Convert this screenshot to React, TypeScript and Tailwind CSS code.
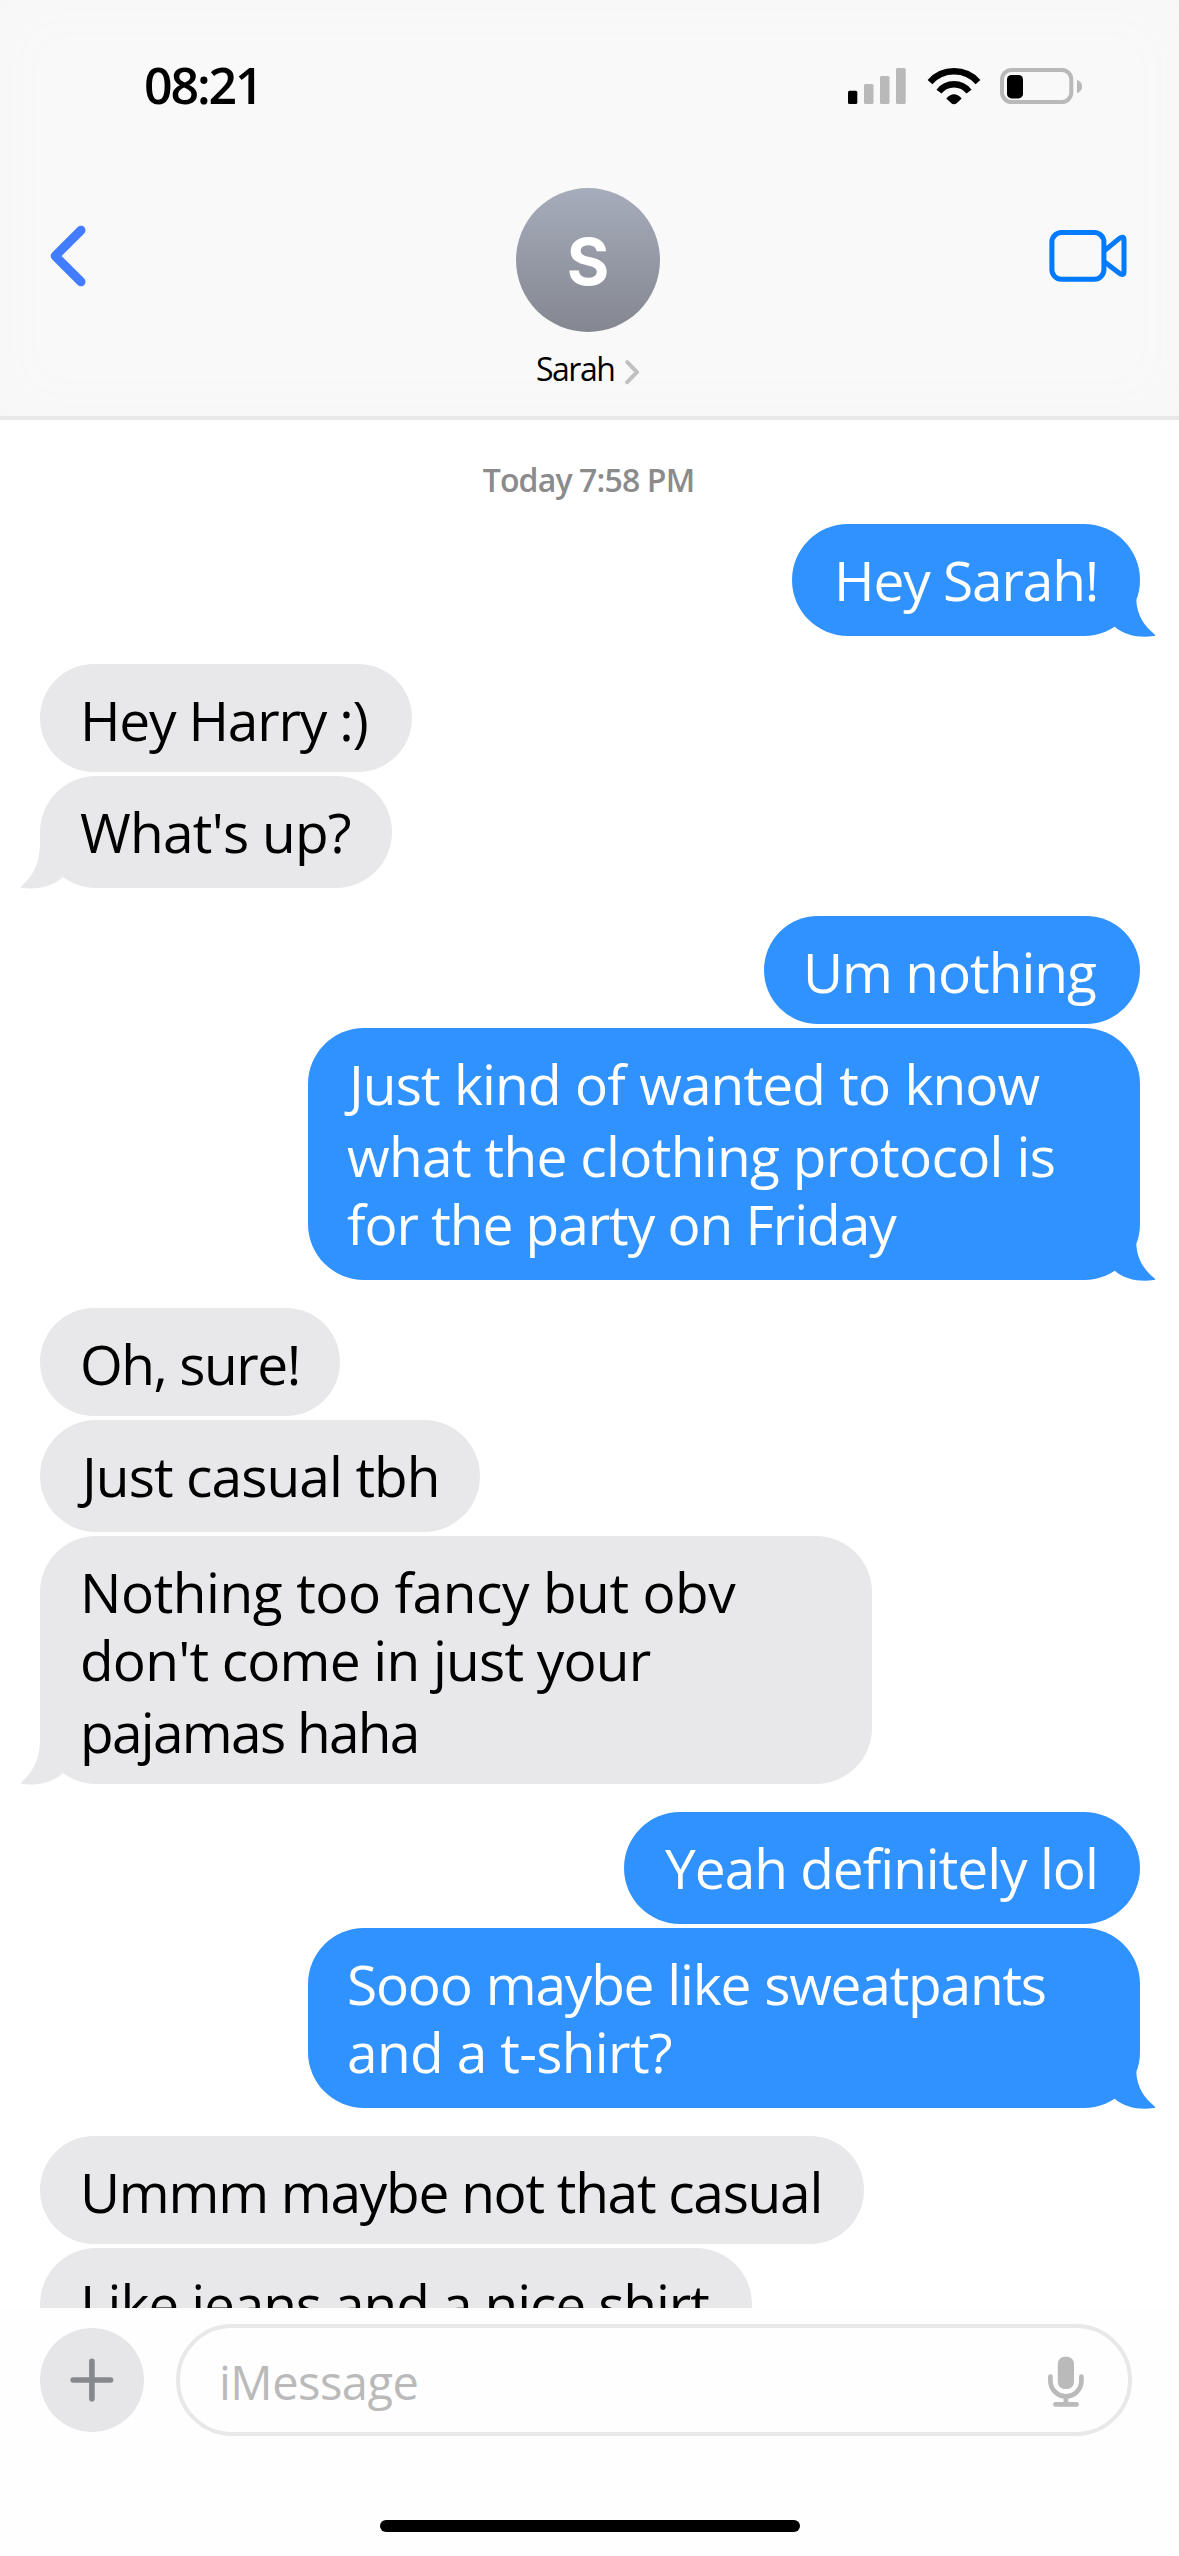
import React from 'react';

type Line = { text: string; style: string };

interface Message {
  from: 'me' | 'them';
  size: string;
  tail?: boolean;
  lines: Line[];
}

// Messages sent in a row by the same person share a group
const groups: Message[][] = [
  [
    { from: 'me', size: 'w-[348px] h-28', tail: true, lines: [{ text: 'Hey Sarah!', style: 'indent-[2px] tracking-[-1.1px]' }] },
  ],
  [
    { from: 'them', size: 'w-[372px] h-27', lines: [{ text: 'Hey Harry :)', style: 'tracking-[-1.2px]' }] },
    { from: 'them', size: 'w-[352px] h-28', tail: true, lines: [{ text: "What's up?", style: 'tracking-[-0.75px]' }] },
  ],
  [
    { from: 'me', size: 'w-[376px] h-27', lines: [{ text: 'Um nothing', style: 'indent-[-1px] tracking-[-1px]' }] },
    {
      from: 'me', size: 'w-[832px] h-63', tail: true,
      lines: [
        { text: 'Just kind of wanted to know', style: 'indent-[1px] tracking-[-0.9px] [word-spacing:1px]' },
        { text: 'what the clothing protocol is', style: 'indent-[-1px] tracking-[-0.66px]' },
        { text: 'for the party on Friday', style: '-mt-1 indent-[-1px] tracking-[-1.04px]' },
      ],
    },
  ],
  [
    { from: 'them', size: 'w-[300px] h-27', lines: [{ text: 'Oh, sure!', style: 'tracking-[-1.45px]' }] },
    { from: 'them', size: 'w-[440px] h-28', lines: [{ text: 'Just casual tbh', style: 'indent-[2px] tracking-[-0.9px]' }] },
    {
      from: 'them', size: 'w-[832px] h-62', tail: true,
      lines: [
        { text: 'Nothing too fancy but obv', style: 'tracking-[-0.43px]' },
        { text: "don't come in just your", style: '-mt-1 tracking-[-0.78px]' },
        { text: 'pajamas haha', style: 'tracking-[-1.71px]' },
      ],
    },
  ],
  [
    { from: 'me', size: 'w-[516px] h-28', lines: [{ text: 'Yeah definitely lol', style: 'indent-[1px] tracking-[-1px]' }] },
    {
      from: 'me', size: 'w-[832px] h-45', tail: true,
      lines: [
        { text: 'Sooo maybe like sweatpants', style: 'indent-[-1px] tracking-[-1.2px] [word-spacing:1px]' },
        { text: 'and a t-shirt?', style: '-mt-1 indent-[-1px] tracking-[-0.65px]' },
      ],
    },
  ],
  [
    { from: 'them', size: 'w-[824px] h-27', lines: [{ text: 'Ummm maybe not that casual', style: 'tracking-[-1.26px]' }] },
    { from: 'them', size: 'w-[712px] h-28', tail: true, lines: [{ text: 'Like jeans and a nice shirt', style: 'tracking-[-1.1px]' }] },
  ],
];

const StatusIcons: React.FC = () => (
  <div className="flex items-start pt-2">
    <svg width="58" height="36" viewBox="0 0 58 36">
      <rect x="0" y="22.7" width="9.3" height="13.3" rx="1.5" fill="#000" />
      <rect x="16" y="16" width="9.5" height="20" rx="1.5" fill="#b9b9b9" />
      <rect x="32" y="8" width="9.5" height="28" rx="1.5" fill="#b9b9b9" />
      <rect x="48" y="0" width="9.7" height="36" rx="1.5" fill="#b9b9b9" />
    </svg>
    <svg className="ml-[21px]" width="54" height="37" viewBox="0 0 54 37" fill="none" stroke="#000" strokeWidth="6.4">
      <path d="M3 14.1a32.1 32.1 0 0 1 48 0" />
      <path d="M12 23.6a19 19 0 0 1 30 0" />
      <path d="M19.3 30.6C22 27.6 24.5 26.3 27 26.3s5 1.3 7.7 4.3l-5 4.6c-1.6 1.3-3.8 1.3-5.4 0z" fill="#000" stroke="none" />
    </svg>
    <svg className="ml-[19px]" width="83" height="36" viewBox="0 0 83 36">
      <rect x="2" y="2" width="69.3" height="32" rx="9.5" fill="none" stroke="#b9b9b9" strokeWidth="4" />
      <rect x="7" y="7" width="16" height="23.4" rx="4.5" fill="#000" />
      <path d="M77 11.7c6.8 2.4 6.8 11.2 0 13.6z" fill="#b9b9b9" />
    </svg>
  </div>
);

const Header: React.FC = () => (
  <header className="h-[420px] shrink-0 bg-[#f9f9f9] border-b-4 border-[#e8e8ea] shadow-[inset_0_0_60px_#f7f7f7]">
    <div className="h-[188px] pt-[60px] pl-36 pr-[96px] flex items-start justify-between">
      <span className="text-[50px] leading-[50px] font-semibold tracking-[-2.1px]">08:21</span>
      <StatusIcons />
    </div>
    <div className="h-36 pl-[50px] pr-[51px] flex items-start">
      <svg className="mt-[37px]" width="36" height="62" viewBox="0 0 36 62" fill="none" stroke="#427cff" strokeWidth="9" strokeLinecap="round" strokeLinejoin="round">
        <path d="M31 5.3 5.2 31 31 56.7" />
      </svg>
      <div className="ml-[430px] size-36 rounded-full bg-linear-to-b from-[#a6acbb] to-[#848790] flex items-center justify-center">
        <span className="font-['Inter',sans-serif] font-bold text-[65px] leading-none text-white pt-[3px]">S</span>
      </div>
      <svg className="ml-[389px] mt-[41px]" width="79" height="54" viewBox="0 0 79 54" fill="none" stroke="#007aff" strokeWidth="5" strokeLinejoin="round">
        <rect x="2.9" y="3.6" width="52" height="46.6" rx="9.5" />
        <path d="M55 22.2 70.4 9.4c2.6-2.1 4.6-1.6 4.6 1.6v31.7c0 3.2-2 3.7-4.6 1.6L55 32.5" />
      </svg>
    </div>
    <div className="pt-4 pl-[536px] flex">
      <span className="w-[89px] pt-px text-[32px] leading-10 tracking-[-1.5px]">Sarah</span>
      <svg className="mt-3" width="15" height="25" viewBox="0 0 15 25" fill="none" stroke="#c0c0c0" strokeWidth="4" strokeLinecap="round" strokeLinejoin="round">
        <path d="M2.2 2.2 12 12.2 2.2 22.2" />
      </svg>
    </div>
  </header>
);

const Tail: React.FC<{ from: Message['from'] }> = ({ from }) =>
  from === 'me' ? (
    <svg className="absolute -right-4 -bottom-0.5" width="44" height="40" viewBox="0 0 44 40" fill="#3092ff">
      <path d="M24.3 2.3C25 17 32 28 42.7 36.4c.8.8.5 1.5-1 1.7C27 40 13 37.5 2.7 28.7L6 6z" />
    </svg>
  ) : (
    <svg className="absolute -left-5 -bottom-0.5" width="44" height="58" viewBox="0 0 44 58" fill="#e8e8ea">
      <path d="M20 0v10C20 30 14 43 1.4 54.2c-.8.8-.5 1.7 1 1.9C18 57.8 32 54.5 43.3 45L42 0z" />
    </svg>
  );

const Bubble: React.FC<{ message: Message }> = ({ message }) => {
  const { from, size, tail, lines } = message;
  const look = from === 'me' ? 'self-end bg-[#3092ff] text-white' : 'self-start bg-[#e8e8ea] text-black';
  return (
    <div className={`relative rounded-[56px] pl-10 pt-5 flex flex-col text-[55px] leading-[72px] whitespace-nowrap ${look} ${size}`}>
      {tail && <Tail from={from} />}
      {lines.map(line => (
        <span key={line.text} className={`relative ${line.style}`}>{line.text}</span>
      ))}
    </div>
  );
};

const Composer: React.FC = () => (
  <footer className="grow bg-[#fefefe] flex flex-col">
    <div className="pt-4 pl-10 flex items-start">
      <button className="mt-1 size-26 rounded-full bg-[#e6e6e8] flex items-center justify-center">
        <svg width="44" height="44" viewBox="0 0 44 44" stroke="#85898e" strokeWidth="5.6" strokeLinecap="round">
          <path d="M3.2 22h37.4M21.9 3.3v37.4" />
        </svg>
      </button>
      <div className="ml-8 w-[956px] h-28 rounded-full border-4 border-[#e8e8e8] pl-[39px] pr-11 flex items-start justify-between">
        <span className="pt-[20px] text-[47px] leading-[68px] tracking-[-0.5px] text-[#bababa]">iMessage</span>
        <svg className="mt-7" width="36" height="52" viewBox="0 0 36 52" fill="none" stroke="#bababa" strokeWidth="4.7" strokeLinecap="round">
          <rect x="9.8" y="0.8" width="16.2" height="32.3" rx="7" fill="#bababa" stroke="none" />
          <path d="M2.4 20.6v4.2a15.5 15.5 0 0 0 31 0v-4.2M17.9 41v7M7.4 48.4h21.2" />
        </svg>
      </div>
    </div>
    <div className="mt-auto mb-6 ml-[380px] w-[420px] h-3 rounded-full bg-black" />
  </footer>
);

const App: React.FC = () => {
  return (
    <div className="w-[1179px] h-[2556px] flex flex-col bg-white text-black font-['Open_Sans','Noto_Sans',sans-serif] overflow-hidden">
      <Header />
      <main className="h-[1888px] shrink-0 overflow-hidden pt-10 pl-10 pr-[39px] flex flex-col">
        <div className="h-16 shrink-0 pr-[3px] text-center text-[32px] leading-10 font-semibold tracking-[-0.85px] text-[#8b8b8e]">Today 7:58 PM</div>
        <div className="flex flex-col gap-7">
          {groups.map((group, i) => (
            <div key={i} className="flex flex-col gap-1">
              {group.map(message => (
                <Bubble key={message.lines[0].text} message={message} />
              ))}
            </div>
          ))}
        </div>
      </main>
      <Composer />
    </div>
  );
};

export default App;
